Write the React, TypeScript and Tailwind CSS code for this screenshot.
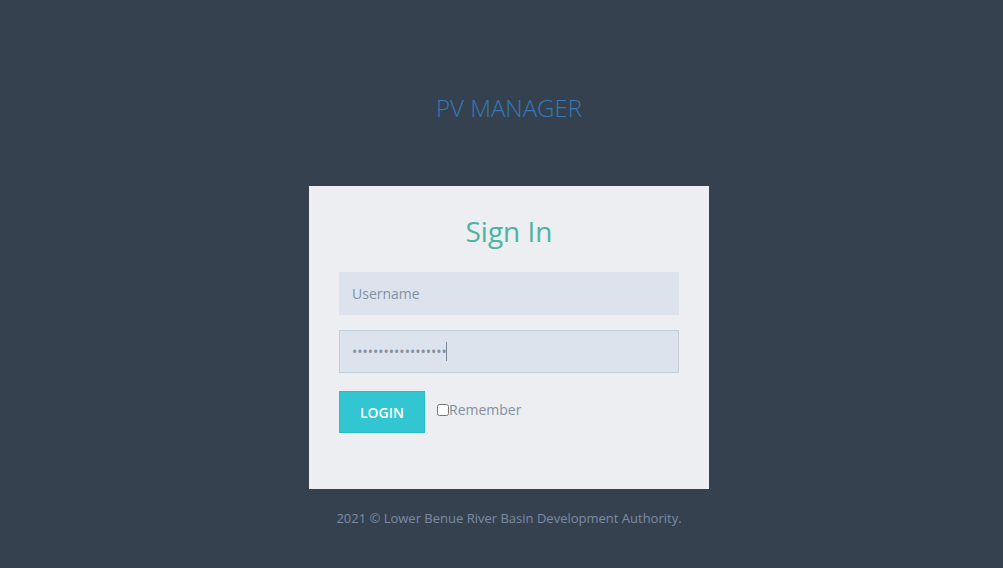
import React from "react";

export default function App() {
  return (
    <div
      className="min-h-[568px] w-full bg-[#364150] flex flex-col items-center pl-[15px]"
      style={{ fontFamily: '"Open Sans", "Liberation Sans", sans-serif' }}
    >
      <div className="mt-[92px] h-[32px] flex items-center justify-center">
        <span className="text-[24px] font-light text-[#337ab7] leading-none">PV MANAGER</span>
      </div>
      <div className="mt-[62px] w-[400px] h-[303px] bg-[#eceef1] px-[30px] pt-[30px]">
        <h3 className="text-center text-[28px] font-normal text-[#4db3a2] leading-[31px]">Sign In</h3>
        <form className="mt-[25px] flex flex-col" onSubmit={(e) => e.preventDefault()}>
          <input
            type="text"
            placeholder="Username"
            className="h-[43px] w-full bg-[#dde3ec] border border-[#dde3ec] px-[12px] text-[14px] text-[#8290a3] placeholder:text-[#8290a3] outline-none"
          />
          <div className="relative mt-[15px]">
            <input
              type="password"
              defaultValue="passwordpassword12"
              className="h-[43px] w-full bg-[#dde3ec] border border-[#c3cedd] px-[12px] text-[14px] text-[#8290a3] outline-none"
            />
            <span className="absolute left-[107px] top-[12px] w-px h-[19px] bg-[#7b889b]" />
          </div>
          <div className="mt-[18px] flex items-start">
            <button
              type="submit"
              className="h-[42px] w-[86px] bg-[#32c5d2] border border-[#2bbcc9] text-white text-[14px] font-semibold uppercase"
            >
              Login
            </button>
            <label className="ml-[12px] mt-[8px] flex items-center text-[14px] text-[#8290a3]">
              <input type="checkbox" className="m-0 w-[12px] h-[12px]" />
              Remember
            </label>
          </div>
        </form>
      </div>
      <div className="mt-[20px] text-[13px] text-[#7a8ca5] text-center">
        2021 © Lower Benue River Basin Development Authority.
      </div>
    </div>
  );
}
